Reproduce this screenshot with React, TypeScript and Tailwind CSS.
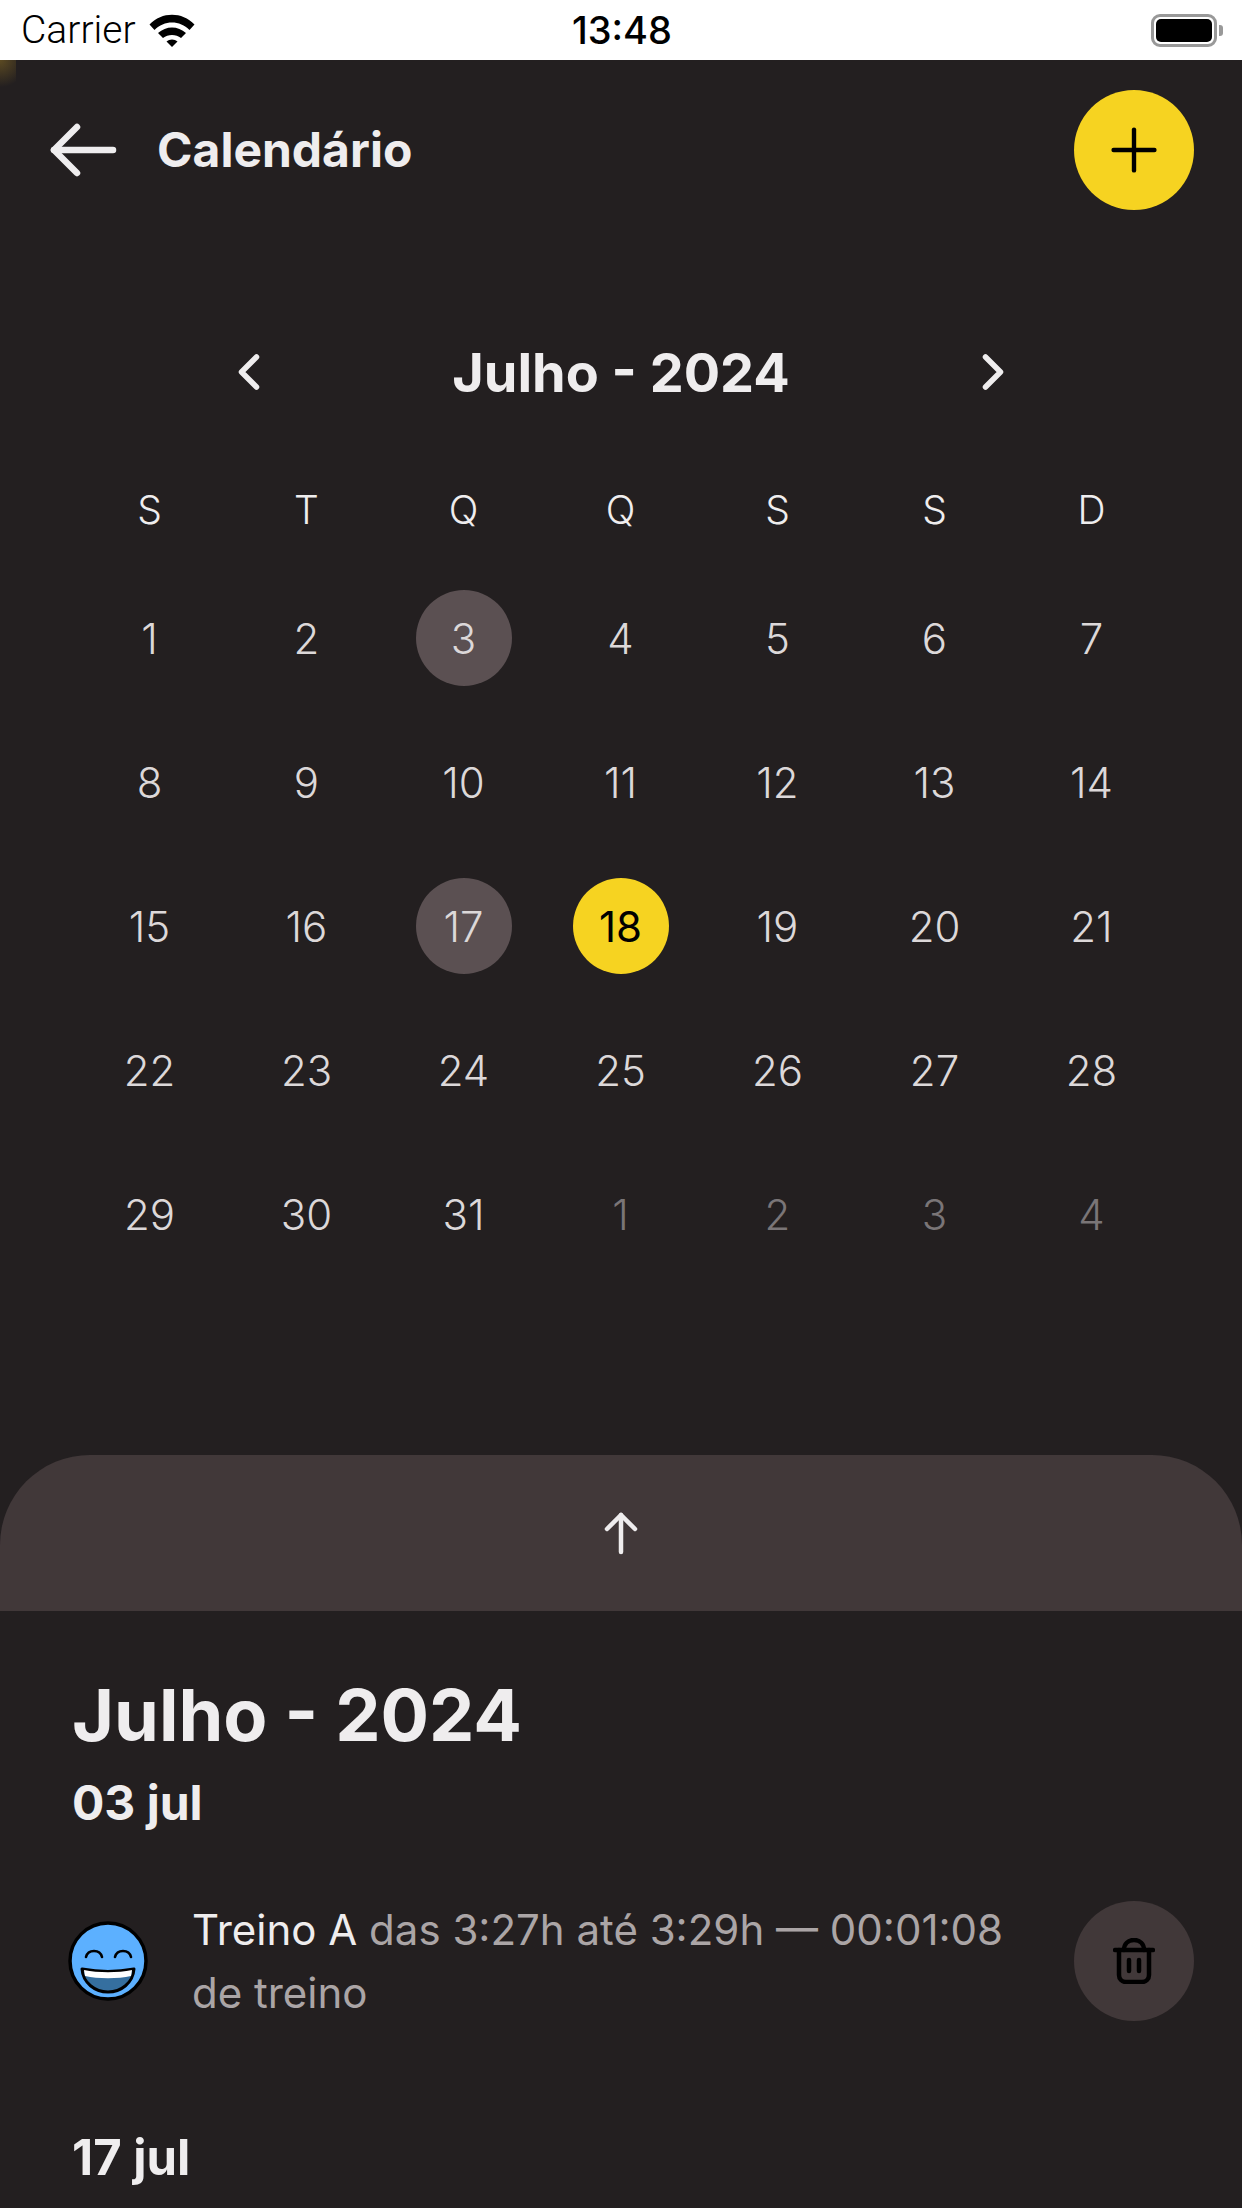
import { ChevronLeft, ChevronRight, Plus } from "lucide-react";

const weekDays = ["S", "T", "Q", "Q", "S", "S", "D"];

const days = [
  1, 2, 3, 4, 5, 6, 7, 8, 9, 10, 11, 12, 13, 14, 15, 16, 17, 18, 19, 20, 21, 22, 23, 24, 25, 26, 27, 28, 29, 30, 31,
];
const nextMonth = [1, 2, 3, 4];
const marked = [3, 17];

function WifiIcon() {
  return (
    <svg viewBox="0 0 46 34" className="w-[46px] h-[34px] ml-[13px]">
      <path d="M0.5 11.5C13 -1.5 33 -1.5 45.5 11.5L40.5 17C31 7 15 7 5.5 17Z" fill="#000" />
      <path d="M9 20C17 12.5 29 12.5 37 20L32 25C27 21 19 21 14 25Z" fill="#000" />
      <path d="M17.5 28.5C20.5 25.7 25.5 25.7 28.5 28.5L23 34Z" fill="#000" />
    </svg>
  );
}

function BatteryIcon() {
  return (
    <div className="flex items-center">
      <div className="w-[66px] h-[33px] rounded-[9px] border-[3px] border-[#999] p-[2px]">
        <div className="w-full h-full rounded-[5px] bg-black" />
      </div>
      <div className="w-[4px] h-[11px] ml-[2px] bg-[#999] rounded-r-[3px]" />
    </div>
  );
}

function BackArrow() {
  return (
    <svg viewBox="0 0 70 54" className="w-[70px] h-[54px]" fill="none" stroke="#efedee" strokeWidth="6.5" strokeLinecap="round" strokeLinejoin="round">
      <path d="M65 27H6" />
      <path d="M29 4L6 27L29 50" />
    </svg>
  );
}

function UpArrow() {
  return (
    <svg viewBox="0 0 36 44" className="w-[36px] h-[44px]" fill="none" stroke="#efedee" strokeWidth="4.5" strokeLinecap="round" strokeLinejoin="round">
      <path d="M18 41V4" />
      <path d="M4 18L18 4L32 18" />
    </svg>
  );
}

function TrashIcon() {
  return (
    <svg viewBox="0 0 42 46" className="w-[42px] h-[46px]" fill="none" stroke="#000" strokeWidth="4.5" strokeLinecap="round" strokeLinejoin="round">
      <path d="M2 12H40" />
      <path d="M6 12V37C6 41 9 44 13 44H29C33 44 36 41 36 37V12" />
      <path d="M11 12C11 6 15 2 21 2C27 2 31 6 31 12" />
      <path d="M16 22V33" />
      <path d="M26 22V33" />
    </svg>
  );
}

function SmileIcon() {
  return (
    <svg viewBox="0 0 80 80" className="w-[80px] h-[80px]">
      <circle cx="40" cy="40" r="38" fill="#5cb0ff" stroke="#000" strokeWidth="3.5" />
      <path d="M18 36C20 28 32 28 34 36" fill="none" stroke="#000" strokeWidth="2.6" strokeLinecap="round" />
      <path d="M47 36C49 28 61 28 63 36" fill="none" stroke="#000" strokeWidth="2.6" strokeLinecap="round" />
      <path d="M14 48C30 51 50 51 66 48C65 62 53 71 40 71C27 71 15 62 14 48Z" fill="#356f9f" stroke="#000" strokeWidth="3" strokeLinejoin="round" />
      <path d="M16 49C30 52 50 52 64 49L63 55C50 58 30 58 17 55Z" fill="#fff" />
    </svg>
  );
}

function DayCell({ label, className = "" }: { label: number; className?: string }) {
  return (
    <div className="h-[144px] flex items-center justify-center">
      <div className={`w-[96px] h-[96px] rounded-full flex items-center justify-center ${className}`}>{label}</div>
    </div>
  );
}

export default function App() {
  return (
    <div className="relative w-[1242px] h-[2208px] overflow-hidden bg-[#231f20] text-[#efedee] [font-family:Inter,sans-serif]">
      <div className="h-[60px] bg-white text-black grid grid-cols-3 items-center pl-[21px] pr-[19px]">
        <div className="flex items-center text-[39px] font-light [font-family:Roboto,sans-serif]">
          Carrier
          <WifiIcon />
        </div>
        <div className="text-center text-[38px] font-medium">13:48</div>
        <div className="flex justify-end">
          <BatteryIcon />
        </div>
      </div>
      <div className="absolute left-0 top-[60px] w-[16px] h-[30px] bg-[radial-gradient(circle_at_left_top,#5c4a22,#231f20_80%)]" />

      <div className="flex items-center justify-between pt-[30px] pl-[48px] pr-[48px]">
        <div className="flex items-center gap-[39px]">
          <BackArrow />
          <h1 className="text-[48px] font-bold">Calendário</h1>
        </div>
        <button className="w-[120px] h-[120px] rounded-full bg-[#f6d321] flex items-center justify-center text-black">
          <Plus size={70} strokeWidth={1.5} />
        </button>
      </div>

      <div className="flex items-center justify-center mt-[132px] h-[60px]">
        <ChevronLeft size={60} strokeWidth={2.2} />
        <div className="w-[684px] text-center text-[54px] font-bold">Julho - 2024</div>
        <ChevronRight size={60} strokeWidth={2.2} />
      </div>

      <div className="grid grid-cols-7 w-[1099px] ml-[71px] mt-[78px] text-[39px] font-[350]">
        {weekDays.map((d, i) => (
          <div key={i} className="h-[60px] flex items-center justify-center">
            {d}
          </div>
        ))}
      </div>
      <div className="grid grid-cols-7 w-[1099px] ml-[71px] mt-[26px] text-[42px] font-[350] text-[#dcd8d9]">
        {days.map((d) => (
          <DayCell
            key={d}
            label={d}
            className={d === 18 ? "bg-[#f6d321] text-black font-normal" : marked.includes(d) ? "bg-[#5b5052]" : ""}
          />
        ))}
        {nextMonth.map((d) => (
          <DayCell key={`n${d}`} label={d} className="text-[#7a7577]" />
        ))}
      </div>

      <div className="mt-[169px] h-[156px] rounded-t-[90px] bg-[#413839] flex items-center justify-center">
        <UpArrow />
      </div>

      <div className="pl-[72px] pr-[48px]">
        <h2 className="mt-[59px] text-[72px] leading-[90px] font-bold">Julho - 2024</h2>
        <h3 className="mt-[13px] text-[48px] leading-[60px] font-bold">03 jul</h3>

        <div className="flex items-center mt-[65px] -ml-[4px]">
          <SmileIcon />
          <p className="ml-[44px] w-[840px] text-[42px] leading-[63px] text-[#aba5a6]">
            <span className="text-[#efedee]">Treino A</span> das 3:27h até 3:29h — 00:01:08 de treino
          </p>
          <button className="ml-auto w-[120px] h-[120px] rounded-full bg-[#413839] flex items-center justify-center">
            <TrashIcon />
          </button>
        </div>

        <h3 className="mt-[104px] text-[49px] leading-[60px] font-bold">17 jul</h3>
      </div>
    </div>
  );
}
